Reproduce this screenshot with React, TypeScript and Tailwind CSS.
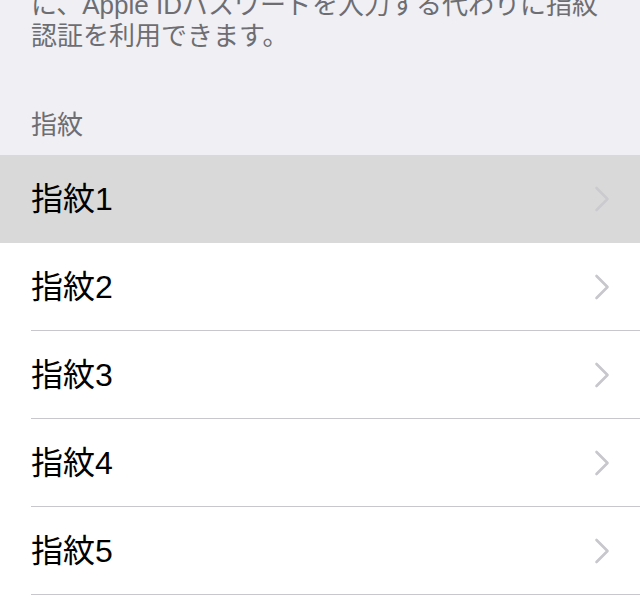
const fingerprints = ["指紋1", "指紋2", "指紋3", "指紋4", "指紋5"];

function Chevron({ light }: { light?: boolean }) {
  return (
    <svg width="16" height="26" viewBox="0 0 16 26" className="shrink-0">
      <path
        d="M2.5 2 L13.5 13 L2.5 24"
        fill="none"
        stroke={light ? "#cbcbcf" : "#c7c7cc"}
        strokeWidth="2.6"
        strokeLinecap="round"
        strokeLinejoin="round"
      />
    </svg>
  );
}

export default function App() {
  return (
    <div
      className="w-[640px] h-[600px] overflow-hidden bg-[#efeff4] flex flex-col"
      style={{ fontFamily: '"Liberation Sans", "Noto Sans CJK JP", sans-serif' }}
    >
      {/* footer text of the previous group, cut off at the top */}
      <p className="mt-[-10px] px-[31px] text-[26px] leading-[31px] text-[#6d6d72] whitespace-nowrap">
        に、Apple IDパスワードを入力する代わりに指紋
        <br />
        認証を利用できます。
      </p>

      {/* section header */}
      <p className="mt-[58px] pb-[14px] px-[31px] text-[26px] leading-[31px] text-[#6d6d72]">
        指紋
      </p>

      <div className="flex flex-col bg-white flex-1">
        {fingerprints.map((name, i) => {
          const selected = i === 0;
          return (
            <div
              key={name}
              className={
                selected
                  ? "h-[88px] pl-[31px] flex bg-[#d9d9d9]"
                  : "h-[88px] pl-[31px] flex bg-white"
              }
            >
              <div
                className={
                  selected
                    ? "flex-1 flex items-center justify-between pr-[30px] border-b border-transparent"
                    : "flex-1 flex items-center justify-between pr-[30px] border-b border-[#c8c7cc]"
                }
              >
                <span className="text-[32px] leading-none text-black">{name}</span>
                <Chevron light={selected} />
              </div>
            </div>
          );
        })}
      </div>
    </div>
  );
}
